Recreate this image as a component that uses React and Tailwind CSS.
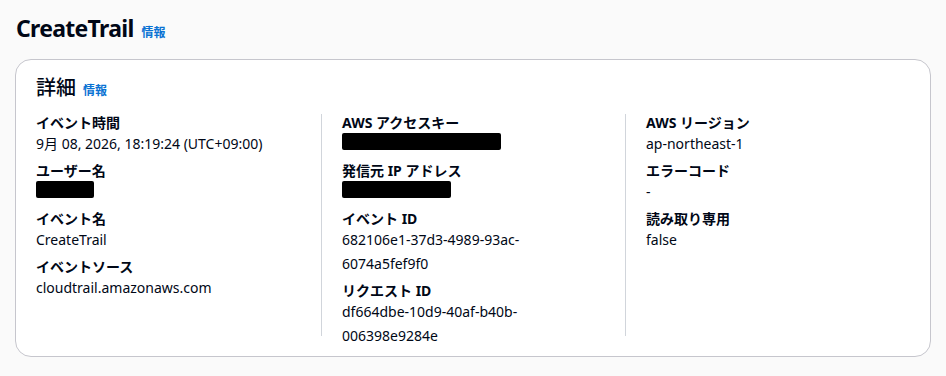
import React from 'react';

const font = { fontFamily: '"Noto Sans", "Noto Sans CJK JP", sans-serif' };

const Redacted = ({ w }) => (
    <div className="pt-px pb-[6px]">
        <div className={`h-[17px] bg-black rounded-[2px] ${w}`} />
    </div>
);

const Field = ({ label, children }) => (
    <div className="pb-[6px]">
        <div className="text-[14px] leading-[18px] font-bold text-[#000716]">{label}</div>
        <div className="text-[14px] leading-[24px] text-[#000716]">{children}</div>
    </div>
);

export default function App() {
    return (
        <div className="min-h-[376px] bg-[#fafafa] px-[15px] pt-[13px]" style={font}>
            <div className="flex items-baseline gap-[8px] pl-px">
                <h1 className="text-[23px] leading-[30px] font-bold text-[#000716] tracking-[-0.7px]">CreateTrail</h1>
                <a className="text-[12px] font-bold text-[#0972d3]">情報</a>
            </div>
            <div className="mt-[16px] w-[916px] h-[298px] bg-white border border-[#c6c6cd] rounded-[16px] pt-[14px] pl-[20px]">
                <div className="flex items-baseline gap-[7px]">
                    <h2 className="text-[20px] leading-[28px] font-medium text-[#000716]">詳細</h2>
                    <a className="text-[12px] font-bold text-[#0972d3]">情報</a>
                </div>
                <div className="mt-[12px] grid grid-cols-[285px_304px_285px]">
                    <div className="h-[222px]">
                        <Field label="イベント時間">9月 08, 2026, 18:19:24 (UTC+09:00)</Field>
                        <Field label="ユーザー名"><Redacted w="w-[58px]" /></Field>
                        <Field label="イベント名">CreateTrail</Field>
                        <Field label="イベントソース">cloudtrail.amazonaws.com</Field>
                    </div>
                    <div className="h-[222px] border-l border-[#d1d5db] pl-[20px]">
                        <Field label="AWS アクセスキー"><Redacted w="w-[159px]" /></Field>
                        <Field label="発信元 IP アドレス"><Redacted w="w-[109px]" /></Field>
                        <Field label="イベント ID">682106e1-37d3-4989-93ac-<br />6074a5fef9f0</Field>
                        <Field label="リクエスト ID">df664dbe-10d9-40af-b40b-<br />006398e9284e</Field>
                    </div>
                    <div className="h-[222px] border-l border-[#d1d5db] pl-[20px]">
                        <Field label="AWS リージョン">ap-northeast-1</Field>
                        <Field label="エラーコード">-</Field>
                        <Field label="読み取り専用">false</Field>
                    </div>
                </div>
            </div>
        </div>
    );
}
